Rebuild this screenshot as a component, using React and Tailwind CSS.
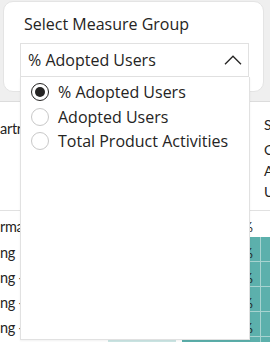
const OPTIONS = ['% Adopted Users', 'Adopted Users', 'Total Product Activities'];

const ROWS = [
  { label: 'ng', value: '38%' },
  { label: 'ng - Digital', value: '41%' },
  { label: 'ng - Events', value: '27%' },
  { label: 'ng - Field', value: '33%' },
  { label: 'ng - Other', value: '20%' },
];

function Radio({ checked }) {
  if (checked) {
    return (
      <span className="flex h-[18px] w-[18px] shrink-0 items-center justify-center rounded-full border-[1.5px] border-[#252423] bg-white">
        <span className="h-[10px] w-[10px] rounded-full bg-[#252423]" />
      </span>
    );
  }
  return <span className="h-[18px] w-[18px] shrink-0 rounded-full border-[1.5px] border-[#c8c8c8] bg-white" />;
}

function Chevron() {
  return (
    <svg width="18" height="10" viewBox="0 0 18 10" fill="none">
      <path d="M1 9.2 L9 1.2 L17 9.2" stroke="#252423" strokeWidth="1.3" />
    </svg>
  );
}

export default function App() {
  return (
    <div className="relative h-[342px] w-[270px] overflow-hidden bg-[#efefef] font-['Open_Sans',sans-serif] text-[#252423]">
      {/* slicer card */}
      <div className="ml-[3px] mr-[6px] mt-[1px] h-[91px] rounded-[10px] border border-[#e4e4e4] bg-white pl-[16px] pr-[14px] pt-[11px]">
        <div className="ml-[4px] h-[22px] text-[16px] leading-[22px] whitespace-nowrap">Select Measure Group</div>
        <div className="mt-[8px] flex h-[34px] items-center justify-between border border-[#e1e1e1] pl-[7px] pr-[6px]">
          <span className="text-[16px] leading-[20px] whitespace-nowrap">% Adopted Users</span>
          <Chevron />
        </div>
      </div>

      {/* report page behind the dropdown */}
      <div className="mt-[9px] h-full border-t border-[#dcdcdc] bg-white font-['Lato',sans-serif] text-[14.5px] leading-[20px]">
        <div className="flex h-[109px] border-b border-[#e1e1e1]">
          <div className="w-[264px] shrink-0 pt-[17px] tracking-[-0.3px] whitespace-nowrap">artr</div>
          <div className="pt-[13px] text-[14px] whitespace-nowrap">
            <div className="leading-[20px]">Segment</div>
            <div className="mt-[4px] leading-[21px]">Country</div>
            <div className="leading-[21px]">Area</div>
            <div className="leading-[21px]">Users</div>
          </div>
        </div>
        <div className="flex h-[26px] pt-[6px]">
          <div className="w-[182px] shrink-0 tracking-[-0.3px] whitespace-nowrap">rma</div>
          <div className="w-[78px] shrink-0 pr-[7px] text-right text-[14px]">%</div>
        </div>
        {ROWS.map((row) => (
          <div key={row.value} className="flex h-[25px]">
            <div className="w-[108px] shrink-0 pt-[6px] tracking-[-0.3px] whitespace-nowrap">{row.label}</div>
            <div className="w-[68px] shrink-0 border-b border-white bg-[#cde7e5]" />
            <div className="w-[6px] shrink-0" />
            <div className="w-[79px] shrink-0 border-b border-r border-[#a7d3d0] bg-[#5cb0ac] pr-[7px] pt-[6px] text-right text-[14px]">{row.value}</div>
            <div className="flex-1 border-b border-[#a7d3d0] bg-[#5cb0ac]" />
          </div>
        ))}
      </div>

      {/* open dropdown list */}
      <div className="absolute left-[20px] top-[77px] h-[263px] w-[230px] border border-t-0 border-[#e1e1e1] bg-white pl-[10px] pt-[3px] shadow-[0_1px_2px_rgba(0,0,0,0.06)]">
        {OPTIONS.map((opt, i) => (
          <div key={opt} className="flex h-[24.5px] items-center gap-[9px]">
            <Radio checked={i === 0} />
            <span className="text-[16px] leading-[20px] whitespace-nowrap">{opt}</span>
          </div>
        ))}
      </div>
    </div>
  );
}
